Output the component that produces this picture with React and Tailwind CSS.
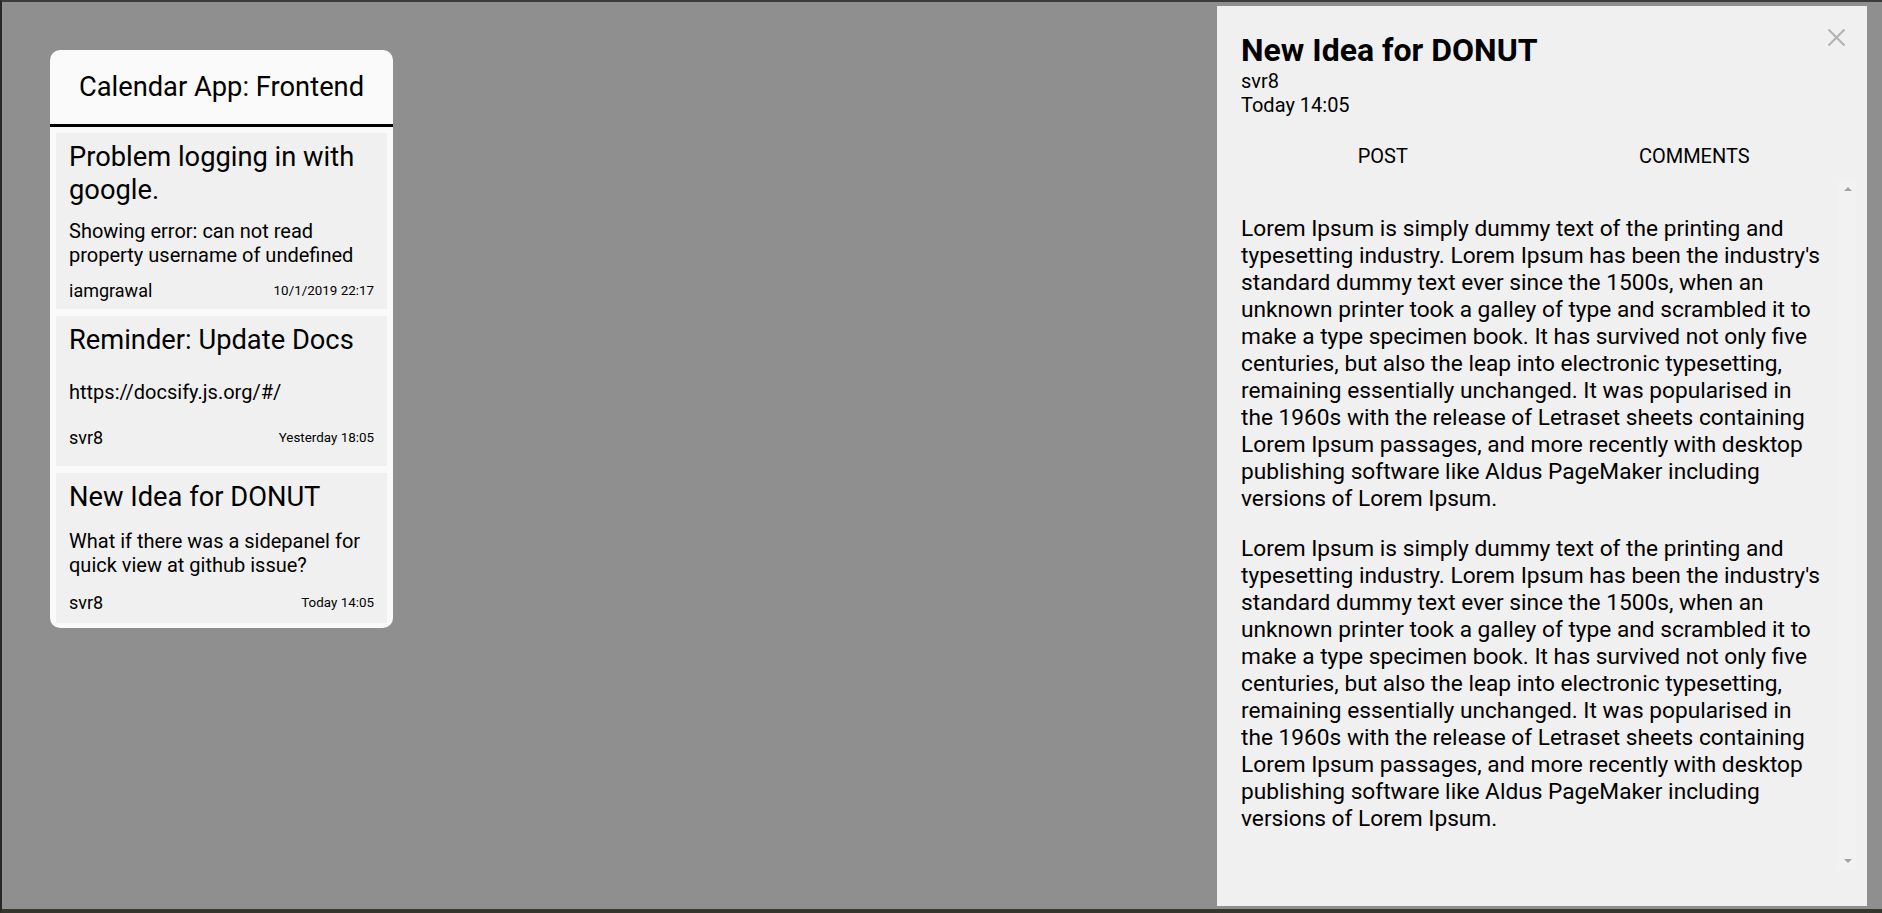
import React from "react";

const posts = [
  {
    id: 1,
    title: "Problem logging in with google.",
    body: "Showing error: can not read property username of undefined",
    author: "iamgrawal",
    time: "10/1/2019 22:17",
  },
  {
    id: 2,
    title: "Reminder: Update Docs",
    body: "https://docsify.js.org/#/",
    author: "svr8",
    time: "Yesterday 18:05",
  },
  {
    id: 3,
    title: "New Idea for DONUT",
    body: "What if there was a sidepanel for quick view at github issue?",
    author: "svr8",
    time: "Today 14:05",
  },
];

const lorem =
  "Lorem Ipsum is simply dummy text of the printing and typesetting industry. Lorem Ipsum has been the industry's standard dummy text ever since the 1500s, when an unknown printer took a galley of type and scrambled it to make a type specimen book. It has survived not only five centuries, but also the leap into electronic typesetting, remaining essentially unchanged. It was popularised in the 1960s with the release of Letraset sheets containing Lorem Ipsum passages, and more recently with desktop publishing software like Aldus PageMaker including versions of Lorem Ipsum.";

function IssueCard({ post }) {
  return (
    <div className="flex min-h-[150px] flex-col bg-[#f0f0f0] px-[13px] pt-2">
      <div className="text-[27.3px] leading-[32.5px]">{post.title}</div>
      <div className="h-[13px] shrink-0 grow" />
      <p className="text-[20px] leading-[normal]">{post.body}</p>
      <div className="h-[13px] shrink-0 grow" />
      <div className="flex items-center justify-between">
        <span className="text-[18px] leading-[normal]">{post.author}</span>
        <span className="text-[13.4px] leading-[normal]">{post.time}</span>
      </div>
      <div className="h-2 shrink-0 grow" />
    </div>
  );
}

function Board() {
  return (
    <div className="ml-12 mt-12 w-[343px] overflow-hidden rounded-[10px] bg-[#fafafa]">
      <div className="flex h-[77px] items-center justify-center border-b-[3px] border-black text-[27.3px] leading-[normal]">
        Calendar App: Frontend
      </div>
      <div className="flex flex-col gap-[7px] px-[6px] pb-[5px] pt-[6px]">
        {posts.map((post) => (
          <IssueCard key={post.id} post={post} />
        ))}
      </div>
    </div>
  );
}

function SidePanel() {
  const post = posts[2];
  return (
    <aside className="mr-[15px] mt-1 flex h-[900px] w-[650px] flex-col bg-[#f0f0f0]">
      <div className="flex items-start justify-between pl-6 pr-[21px] pt-[25px]">
        <div>
          <h1 className="text-[32px] font-bold leading-[normal]">{post.title}</h1>
          <div className="text-[20px] leading-[normal]">{post.author}</div>
          <div className="text-[20px] leading-[normal]">{post.time}</div>
        </div>
        <button className="-mt-[3px] text-[#b3b3b3]">
          <svg width="19" height="19" viewBox="0 0 19 19" fill="none" stroke="currentColor" strokeWidth="2.2">
            <path d="M1.5 1.5l16 16M17.5 1.5l-16 16" />
          </svg>
        </button>
      </div>
      <div className="mt-[15px] flex h-12 pl-[10px] pr-[17px] text-[20px] leading-[normal]">
        <button className="flex-1">POST</button>
        <button className="flex-1">COMMENTS</button>
      </div>
      <div className="flex h-[690px] pl-6 pr-[11px]">
        <div className="flex-1 pr-[15px] pt-[35px] text-[22.7px] leading-[27px]">
          <p>{lorem}</p>
          <p className="mt-[23px]">{lorem}</p>
        </div>
        <div className="flex w-[17px] flex-col items-center justify-between bg-[#f2f2f2] pb-[7px] pt-[7px]">
          <div className="h-0 w-0 border-x-4 border-b-4 border-x-transparent border-b-[#a3a3a3]" />
          <div className="h-0 w-0 border-x-4 border-t-4 border-x-transparent border-t-[#a3a3a3]" />
        </div>
      </div>
    </aside>
  );
}

export default function App() {
  return (
    <div className="flex h-[913px] items-start justify-between border-b-4 border-l-2 border-t-2 border-b-[#35362e] border-l-[#262626] border-t-[#3b3b3b] bg-[#8f8f8f] font-[Roboto,sans-serif] text-black">
      <Board />
      <SidePanel />
    </div>
  );
}
